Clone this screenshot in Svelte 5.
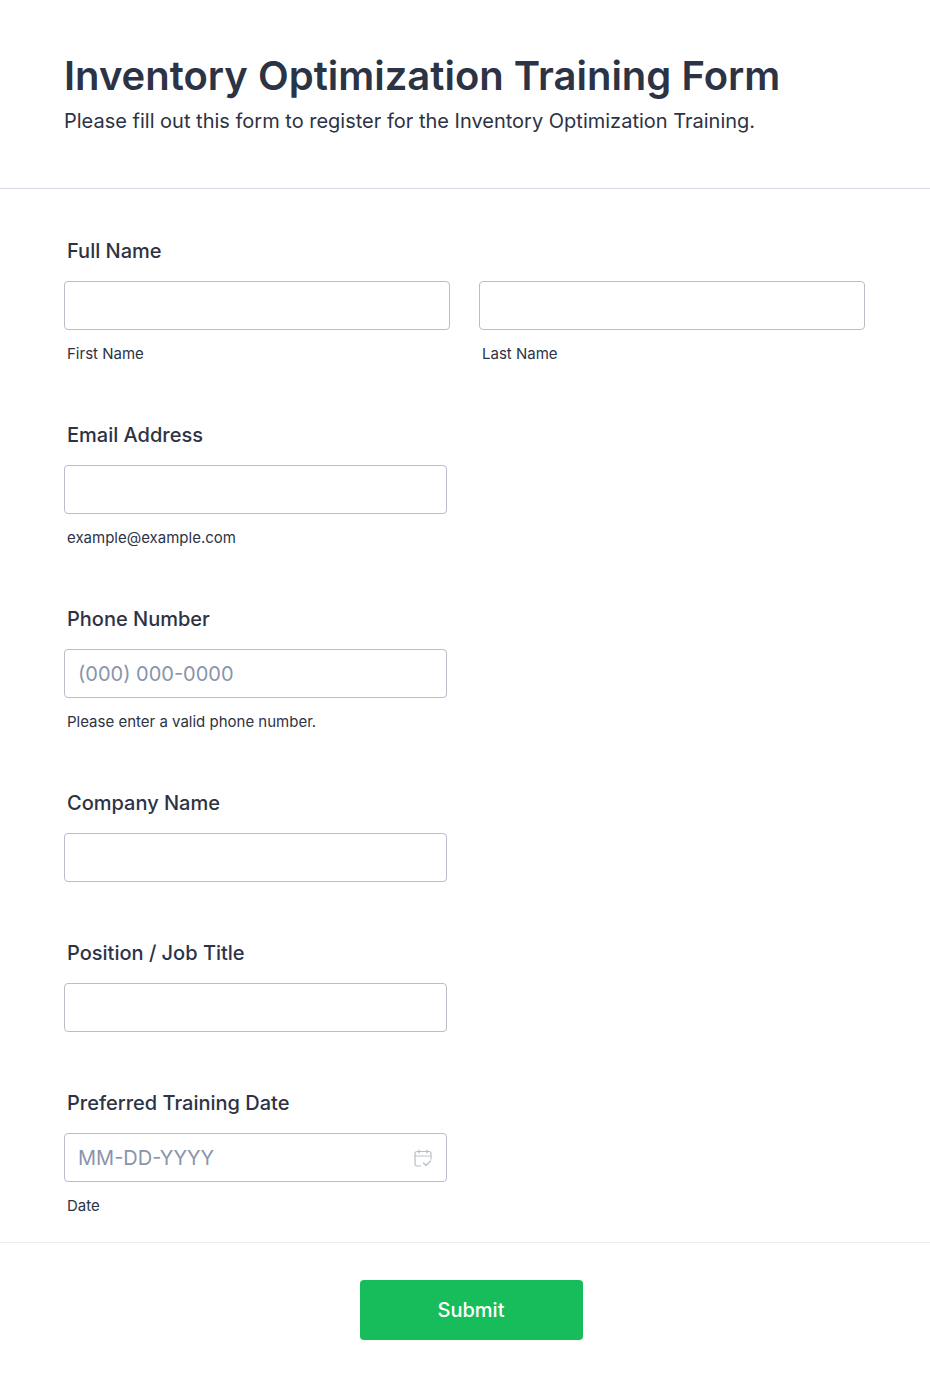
<script>
  const fields = [
    { label: 'Email Address', sub: 'example@example.com' },
    { label: 'Phone Number', placeholder: '(000) 000-0000', sub: 'Please enter a valid phone number.' },
    { label: 'Company Name' },
    { label: 'Position / Job Title' },
    { label: 'Preferred Training Date', placeholder: 'MM-DD-YYYY', sub: 'Date', date: true }
  ];
</script>

<main class="page">
  <header class="head">
    <h1>Inventory Optimization Training Form</h1>
    <p>Please fill out this form to register for the Inventory Optimization Training.</p>
  </header>

  <section class="form">
    <div class="field">
      <div class="label">Full Name</div>
      <div class="pair">
        <div class="col">
          <div class="input"></div>
          <div class="sub">First Name</div>
        </div>
        <div class="col">
          <div class="input"></div>
          <div class="sub">Last Name</div>
        </div>
      </div>
    </div>

    {#each fields as f}
      <div class="field">
        <div class="label">{f.label}</div>
        <div class="input single">
          {#if f.placeholder}<span class="ph">{f.placeholder}</span>{/if}
          {#if f.date}
            <svg class="cal" width="18" height="18" viewBox="0 0 18 18" fill="none" stroke="#b8bdc9" stroke-width="1.2" stroke-linecap="round" stroke-linejoin="round">
              <path d="M6.5 17H3a2 2 0 0 1-2-2V4.5a2 2 0 0 1 2-2h12a2 2 0 0 1 2 2V10" />
              <path d="M1 7h16" stroke-dasharray="2 1.2" />
              <path d="M5 1v3M13 1v3" />
              <path d="M9.5 14l2.5 2.5 4.5-4.5" />
            </svg>
          {/if}
        </div>
        {#if f.sub}<div class="sub">{f.sub}</div>{/if}
      </div>
    {/each}
  </section>

  <footer class="foot">
    <button class="submit" type="button">Submit</button>
  </footer>
</main>

<style>
  :global(body) {
    margin: 0;
    background: #fff;
  }
  .page {
    width: 930px;
    height: 1390px;
    font-family: Inter, "Liberation Sans", sans-serif;
    color: #2c3345;
    background: #fff;
    box-sizing: border-box;
  }
  .head {
    box-sizing: border-box;
    height: 189px;
    padding: 52px 64px 0;
    border-bottom: 1px solid #d8d8e8;
  }
  h1 {
    margin: 0;
    font-size: 40px;
    line-height: 48px;
    font-weight: 600;
  }
  p {
    margin: 6px 0 0;
    font-size: 20px;
    line-height: 30px;
    font-weight: 400;
  }
  .form {
    box-sizing: border-box;
    height: 1054px;
    padding: 50px 64px 0;
    border-bottom: 1px solid #eaeaf2;
  }
  .field {
    margin-bottom: 59px;
  }
  .field:has(.sub) {
    margin-bottom: 59px;
  }
  .label {
    margin-left: 3px;
    font-size: 20px;
    line-height: 24px;
    font-weight: 500;
    margin-bottom: 18px;
  }
  .pair {
    display: flex;
    gap: 29px;
    width: 801px;
  }
  .col {
    flex: 1;
  }
  .input {
    box-sizing: border-box;
    height: 49px;
    border: 1px solid #b8bdc9;
    border-radius: 4px;
    background: #fff;
    display: flex;
    align-items: center;
    justify-content: space-between;
    padding: 0 14px 0 13px;
  }
  .single {
    width: 383px;
  }
  .ph {
    font-size: 20px;
    color: #8894ab;
    font-weight: 400;
  }
  .sub {
    margin: 14px 0 0 3px;
    font-size: 15px;
    line-height: 20px;
    color: #2c3345;
  }
  .cal {
    display: block;
  }
  .foot {
    display: flex;
    justify-content: center;
    padding-top: 37px;
    padding-left: 12px;
  }
  .submit {
    width: 223px;
    height: 60px;
    border: none;
    border-radius: 4px;
    background: #18bd5b;
    color: #fff;
    font-family: inherit;
    font-size: 20px;
    font-weight: 500;
  }
</style>
